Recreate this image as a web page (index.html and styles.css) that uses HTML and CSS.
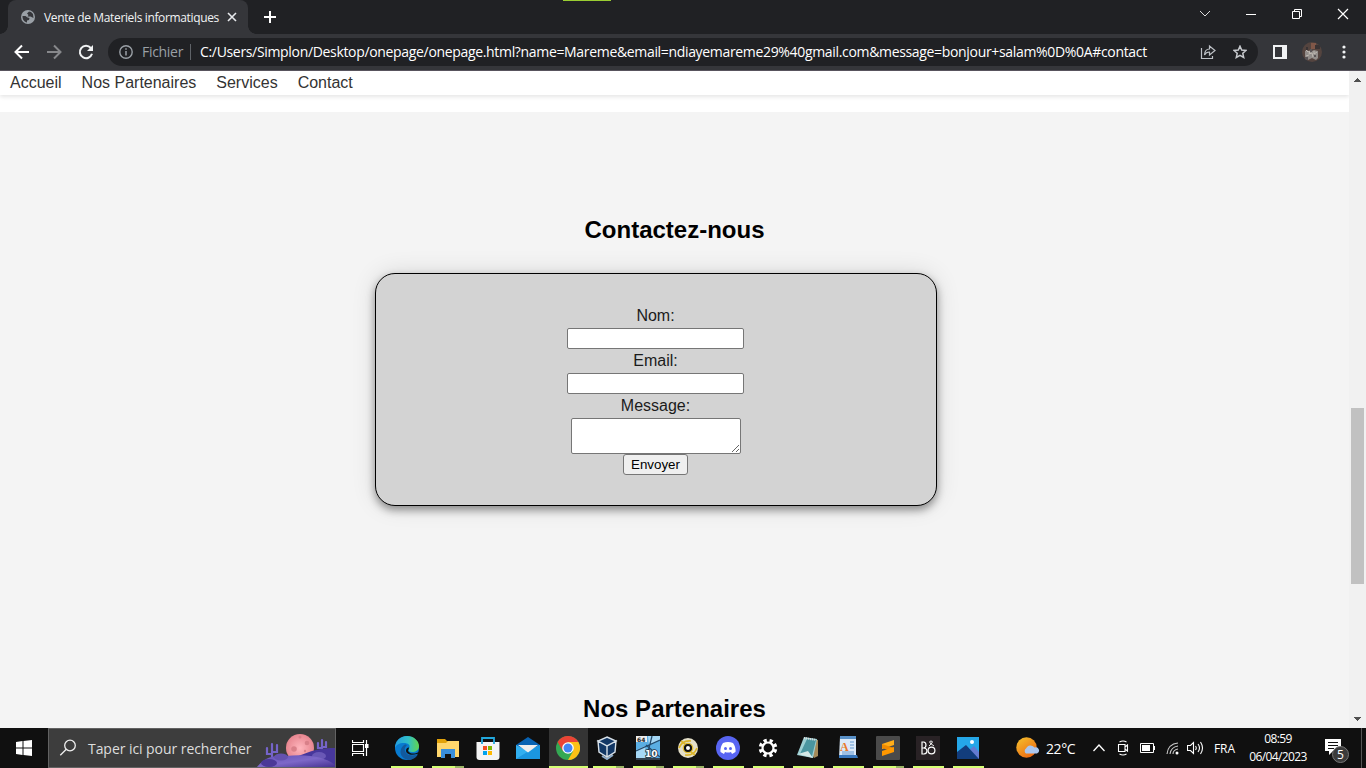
FILE: index.html
```html
<!DOCTYPE html>
<html lang="fr">
<head>
<meta charset="utf-8">
<title>Vente de Materiels informatiques</title>
<link rel="stylesheet" href="styles.css">
</head>
<body>
<div class="screen">
<header class="tabs">
  <div class="tab">
    <svg class="globe" width="14" height="14" viewBox="0 0 14 14"><circle cx="7" cy="7" r="7" fill="#9aa0a6"/><path d="M1.500 6h3l2 1.500 2 .5-.5 2-2 .5v2C3.500 12 1.500 10 1.500 6zM8 1.500l-2 2L7.500 5l-1 1.500h3L12.500 8 12 4 10 2z" fill="#35363a"/></svg>
    <span class="tab-title">Vente de Materiels informatiques</span>
    <svg class="tab-close" width="10" height="10" viewBox="0 0 10 10"><path d="m1 1 8 8M9 1 1 9" stroke="#e8eaed" stroke-width="1.600"/></svg>
  </div>
  <svg class="plus" width="12" height="12" viewBox="0 0 12 12"><path d="M6 0v12M0 6h12" stroke="#fff" stroke-width="2"/></svg>
  <div class="accent"></div>
  <div class="window-controls">
    <svg width="12" height="12" viewBox="0 0 12 12"><path d="m1 3 5 5 5-5" fill="none" stroke="#ddd"/></svg>
    <svg width="12" height="12" viewBox="0 0 12 12"><path d="M1 6.500h10" stroke="#fff"/></svg>
    <svg width="12" height="12" viewBox="0 0 12 12"><path d="M1.500 3.500h7v7h-7zM3.500 3V1.500h7v7H9" fill="none" stroke="#fff"/></svg>
    <svg width="12" height="12" viewBox="0 0 12 12"><path d="m1 1 10 10M11 1 1 11" stroke="#fff" stroke-width="1.200"/></svg>
  </div>
</header>
<div class="toolbar">
  <svg class="arrow" width="16" height="16" viewBox="0 0 16 16"><path d="M15 8H2M8 1.500 1.500 8 8 14.500" fill="none" stroke="#fff" stroke-width="2"/></svg>
  <svg class="arrow" width="16" height="16" viewBox="0 0 16 16"><path d="M1 8h13M8 1.500 14.500 8 8 14.500" fill="none" stroke="#87888b" stroke-width="2"/></svg>
  <svg class="reload" width="16" height="16" viewBox="0 0 16 16"><path d="M12.800 4A6.200 6.200 0 1 0 14 9.800" fill="none" stroke="#f1f3f4" stroke-width="2"/><path d="M15 1v6H9z" fill="#f1f3f4"/></svg>
  <div class="address">
    <svg class="info" width="14" height="14" viewBox="0 0 14 14"><circle cx="7" cy="7" r="6.200" fill="none" stroke="#9aa0a6" stroke-width="1.400"/><path d="M7 6v4.500M7 3.300v1.500" stroke="#9aa0a6" stroke-width="1.500"/></svg>
    <span class="scheme">Fichier</span><span class="divider"></span>
    <span class="url">C:/Users/Simplon/Desktop/onepage/onepage.html?name=Mareme&amp;email=ndiayemareme29%40gmail.com&amp;message=bonjour+salam%0D%0A#contact</span>
    <svg class="share" width="16" height="16" viewBox="0 0 16 16"><path d="M1.500 4v10.500h11V12M4.500 11c.2-4 2.200-6 5-6V2L15 6.500 9.500 11V8C7 8 5.500 9 4.500 11z" fill="none" stroke="#bdc1c6" stroke-width="1.200"/></svg>
    <svg class="star" width="14" height="14" viewBox="0 0 14 14"><path d="m7 1.200 1.700 3.900 4.300.4-3.200 2.800.9 4.200L7 10.300l-3.700 2.200.9-4.200L1 5.500l4.300-.4z" fill="none" stroke="#c7cace" stroke-width="1.500"/></svg>
  </div>
  <svg class="panel" width="14" height="14" viewBox="0 0 14 14"><path d="M0 0h14v14H0z" fill="#f1f3f4"/><path d="M2 2h7v10H2z" fill="#35363a"/></svg>
  <svg class="avatar" width="20" height="20" viewBox="0 0 20 20"><defs><clipPath id="av"><circle cx="10" cy="10" r="10"/></clipPath></defs><g clip-path="url(#av)"><path d="M0 0h20v20H0z" fill="#54443f"/><path d="M9 1h5v6H9z" fill="#805748"/><path d="M4 5h2v3H4zM13 3h5v4h-5z" fill="#393334"/><path d="m3 9 2-1 3 2 4-2 4 1v7l-2 2-4-2-4 2-3-2z" fill="#928d8a"/><path d="m4 8 2 2 2-1-1 3 3-1 1 4M12 9v3l3-2M4 14l3-1" stroke="#beb9b2" fill="none"/><path d="M8 7h2v3H8zm4 6h2v2h-2zM3 15h3v3H3z" fill="#5a5557"/></g></svg>
  <svg class="more" width="4" height="14" viewBox="0 0 4 14"><g fill="#f1f3f4"><circle cx="2" cy="2" r="1.600"/><circle cx="2" cy="7" r="1.600"/><circle cx="2" cy="12" r="1.600"/></g></svg>
</div>
<div class="viewport">
  <div class="page">
    <nav><a>Accueil</a><a>Nos Partenaires</a><a>Services</a><a>Contact</a></nav>
    <main>
      <h2>Contactez-nous</h2>
      <form>
        <label>Nom:</label><input type="text">
        <label>Email:</label><input type="email">
        <label>Message:</label><textarea></textarea>
        <button type="button">Envoyer</button>
      </form>
      <h2 class="partners">Nos Partenaires</h2>
    </main>
  </div>
  <div class="scrollbar">
    <svg width="7" height="4" viewBox="0 0 7 4" shape-rendering="crispEdges"><path d="M0 4 3.500 0 7 4z" fill="#505050"/></svg>
    <div class="thumb"></div>
    <svg class="down" width="7" height="4" viewBox="0 0 7 4" shape-rendering="crispEdges"><path d="m0 0 3.500 4L7 0z" fill="#505050"/></svg>
  </div>
</div>
<footer class="taskbar">
  <svg class="start" width="16" height="16" viewBox="0 0 16 16"><path d="m0 2 6.500-1v6.500H0zm7.500-1L16 0v7.500H7.500zM0 8.500h6.500V15L0 14zm7.500 0H16V16l-8.500-1z" fill="#fff"/></svg>
  <div class="search">
    <svg class="lens" width="18" height="18" viewBox="0 0 18 18"><circle cx="11" cy="6.500" r="5.300" fill="none" stroke="#eee" stroke-width="1.300"/><path d="m7.300 10.300-6 6" stroke="#eee" stroke-width="1.300"/></svg>
    <span class="search-text">Taper ici pour rechercher</span>
    <svg class="scene" width="80" height="38" viewBox="0 0 80 38">
      <defs><linearGradient id="hill" x2="1" y2="1"><stop stop-color="#6451b8"/><stop offset=".5" stop-color="#7d68c8"/><stop offset="1" stop-color="#443090"/></linearGradient><radialGradient id="moon"><stop stop-color="#ffb6bd"/><stop offset="1" stop-color="#e78690"/></radialGradient></defs>
      <circle cx="45" cy="19" r="14" fill="url(#moon)"/><g fill="#d98089"><circle cx="39" cy="20" r="2.800"/><circle cx="52" cy="14" r="2.300"/><circle cx="45" cy="8" r="1.500"/><circle cx="50" cy="22" r="1.200"/></g>
      <path d="M17 32V15M12 19v6h5M22 16v7h-5M67 24V11M63 14v5h4M71 13v5h-4" fill="none" stroke="#7564c9" stroke-width="2.200" stroke-linecap="round"/>
      <path d="M30 32C49 26 57 19 80 19v19H27z" fill="#47379c"/><ellipse cx="64" cy="27" rx="7" ry="4" fill="#6958b6"/>
      <path d="M2 38c9-11 18-12 29-11 28-3 45 4 51 11z" fill="url(#hill)"/><ellipse cx="26" cy="28" rx="7" ry="3.500" fill="#6452af"/><ellipse cx="14" cy="34" rx="8" ry="4" fill="#4b3998"/>
    </svg>
  </div>
  <div class="taskview"><svg width="17" height="16" viewBox="0 0 17 16"><path d="M.5 0v2.500h11V0M.5 4.500h11v7H.5zM.5 16v-2.500h11V16M14.500 0v16" fill="none" stroke="#fff" stroke-width="1.200"/><path d="M13 4h3.500v4H13z" fill="#fff"/></svg></div>
  <div class="apps">
    <div class="app running edge"><svg viewBox="0 0 24 24"><defs><linearGradient id="eg" x2="1"><stop stop-color="#249de0"/><stop offset=".55" stop-color="#30bfc8"/><stop offset="1" stop-color="#62d64b"/></linearGradient></defs><circle cx="12" cy="12" r="12" fill="#087bd0"/><path d="M0 12C0 5 5 0 12 0c7 0 12 5 12 10 0 4-3 6-7 6-3 0-4-1-3-3 2-4-1-6-5-6-5 0-8 2-9 5z" fill="url(#eg)"/><path d="M8 10c-6 7 0 14 7 14 4-1 7-3 8-6-6 3-12 1-13-3-1-2 0-4 2-6-1-1-3-.5-4 1z" fill="#12599d"/><path d="M14 11.500c0 2-2 3 0 4.500 2 2 6 2 9.500 0l.5 2.500q-1-1-2-.5c-6 2-11 0-11-3.500 0-1.500 1-3 3-3z" fill="#111"/></svg></div>
    <div class="app running multi explorer"><svg viewBox="0 0 24 24"><path d="M1 3h8l2 2H23v16H1z" fill="#e2a20a"/><path d="M1 7h9l2-2h11v16H1z" fill="#ffd66c"/><path d="M5 22v-9h14v9h-4v-4H9v4z" fill="#398edb"/><path d="M9 18h6v4H9z" fill="#111"/></svg></div>
    <div class="app"><svg viewBox="0 0 24 24"><path d="M.5 6h23v15q0 3-3 3h-17q-3 0-3-3z" fill="#f4f4f4"/><path d="M6 8V2h12v6" fill="none" stroke="#22a8dd" stroke-width="1.800"/><path d="M7 10h4v4H7z" fill="#f25022"/><path d="M12 10h4v4h-4z" fill="#7fba00"/><path d="M7 15h4v4H7z" fill="#00a4ef"/><path d="M12 15h4v4h-4z" fill="#ffb900"/></svg></div>
    <div class="app"><svg viewBox="0 0 24 24"><path d="M0 9 12 1l12 8v3L12 17 0 12z" fill="#0863b3"/><path d="m0 9 12 6 12-6v14H0z" fill="#32aff0"/><path d="M24 9 12 15.500 0 23h24z" fill="#1b96e0"/><path d="M2 9h20l-10 7.500z" fill="#eee"/></svg></div>
    <div class="app active"><svg viewBox="0 0 24 24"><circle cx="12" cy="12" r="12" fill="#34a853"/><path d="M1.600 6A12 12 0 0 1 22.400 6H12L6.800 15z" fill="#ea4335"/><path d="M22.400 6A12 12 0 0 1 12 24l5.200-9L12 6z" fill="#fbc116"/><circle cx="12" cy="12" r="5.800" fill="#fff"/><circle cx="12" cy="12" r="4.500" fill="#4285f4"/></svg></div>
    <div class="app running multi shifted"><svg viewBox="0 0 24 24"><path d="m7 20 5 3 6-4" fill="none" stroke="#8dabc8" stroke-width="2"/><path d="m12 1 9 4-9 5-9-5zM3 5l9 5v11l-8-5zM21 5l-9 5v11l8-5z" fill="#123765" stroke="#d7e0e8" stroke-width="1.400"/></svg></div>
    <div class="app running multi"><svg viewBox="0 0 24 24"><path d="M0 0h24v24H0z" fill="#5aaee3"/><path d="M12 0h12v4L13 9zM0 14l9-4 2 14H0z" fill="#a6d8f6"/><path d="m16 0-6 24M0 15 24 4M10 9l14 12" stroke="#234b6d" stroke-width="1.300"/><path d="M0 0h11v6H0z" fill="#eee"/><path d="M0 22h24v2H0z" fill="#32404e"/><text x="1" y="5.500" class="cpu-small">64</text><text x="9" y="20.500" class="cpu-big">10</text></svg></div>
    <div class="app running multi"><svg viewBox="0 0 24 24"><circle cx="12" cy="12" r="10" fill="#e4dfc9"/><path d="M3 12Q6 4 15 5M21 12q-3 8-12 7M5 5l4 3M15 16l4 3" fill="none" stroke="#dcb52a" stroke-width="1.700"/><circle cx="12" cy="12" r="4.700" fill="#111" stroke="#e0bd32" stroke-width="1.300"/><circle cx="12" cy="12" r="2" fill="#fff"/></svg></div>
    <div class="app running"><svg viewBox="0 0 24 24"><circle cx="12" cy="12" r="12" fill="#5865f2"/><path d="M7 7q5-2 10 0 3 4 2.500 9L16 18l-1-2q-3 1-6 0l-1 2-3.500-2Q4 11 7 7z" fill="#fff"/><circle cx="9.500" cy="12.500" r="1.500" fill="#5865f2"/><circle cx="14.500" cy="12.500" r="1.500" fill="#5865f2"/></svg></div>
    <div class="app running"><svg viewBox="0 0 24 24"><circle cx="12" cy="12" r="7.600" fill="none" stroke="#fff" stroke-width="3.400" stroke-dasharray="3.200 2.769" transform="rotate(10 12 12)"/><circle cx="12" cy="12" r="5.500" fill="#111" stroke="#fff" stroke-width="2.200"/></svg></div>
    <div class="app running"><svg viewBox="0 0 24 24"><path d="m8 2 14 2v16l-4 2z" fill="#a48a59"/><path d="M8 1 21 3 17 22 1 19z" fill="#9ccfd3"/><path d="m11 3 9 1-4 16-12-2z" fill="#4a96a0"/><path d="m8 2 12 2" stroke="#ddd" stroke-width="2" stroke-dasharray="1 1"/><path d="m2 18 10-3 5 7z" fill="#d4e8e6"/></svg></div>
    <div class="app running"><svg viewBox="0 0 24 24"><path d="M4 1h16v21H3z" fill="#dbe9f8"/><path d="M4 0h16v3H4z" fill="#5991c8"/><path d="M14 6h4M14 9h4M14 12h4M6 16h12M6 18h12" stroke="#6298d1"/><path d="M3 19h18l1 3H3z" fill="#3878be"/><text x="4" y="15" class="wordpad">A</text></svg></div>
    <div class="app running multi"><svg viewBox="0 0 24 24"><rect width="24" height="24" rx="1" fill="#4a4a4a"/><path d="m6 8 12-4v5L6 13z" fill="#ffad19"/><path d="m6 8 12 4v4L6 12z" fill="#f08a00"/><path d="m6 15 12-4v5L6 20z" fill="#ff9800"/></svg></div>
    <div class="app running"><svg viewBox="0 0 24 24"><path d="M0 0h24v24H0z" fill="#292225"/><path d="M6 6v12h2q3-.5 3-3t-3-3H6h1.500q2.500-.3 2.500-3T7.500 6z" fill="none" stroke="#fff" stroke-width="1.200"/><circle cx="15.500" cy="14.500" r="3.400" fill="none" stroke="#fff" stroke-width="1.200"/><path d="m18 10-4-3q-1-2 1-2t1 2l-3 3" fill="none" stroke="#fff" stroke-width=".9"/></svg></div>
    <div class="app running"><svg viewBox="0 0 24 24"><path d="M1 1h22v22H1z" fill="#25a7e8"/><path d="m12 15 6-5 5 6v7H12z" fill="#647bd1"/><path d="M1 16 10 9l13 14H1z" fill="#123d7c"/><circle cx="16" cy="6" r="2" fill="#fff"/></svg></div>
  </div>
  <svg class="weather" width="24" height="22" viewBox="0 0 24 22"><defs><linearGradient id="sun" x2=".7" y2="1"><stop stop-color="#f4c32d"/><stop offset="1" stop-color="#ed6912"/></linearGradient></defs><circle cx="10.500" cy="10.500" r="10.200" fill="url(#sun)"/><path d="M10 16.500a3 3 0 0 1 0-5 5 5 0 0 1 8.500-1 3 3 0 0 1 2.500 6z" fill="#aac6ef"/></svg>
  <span class="temp">22°C</span>
  <div class="tray">
    <svg class="chevron" width="14" height="10" viewBox="0 0 14 10"><path d="m1.500 8 5.500-6 5.500 6" fill="none" stroke="#fff" stroke-width="1.300"/></svg>
    <svg class="meet" width="12" height="16" viewBox="0 0 12 16"><path d="M1.500 4.500h6.500v7H1.500zM8 7l2.500-2v6L8 9M2.500 2q3.500-2 7 0M2.500 14q3.500 2 7 0" fill="none" stroke="#fff" stroke-width="1.100"/></svg>
    <svg class="battery" width="15" height="10" viewBox="0 0 15 10"><path d="M.5.5h13v9H.5zM14.500 3v4" fill="none" stroke="#fff"/><path d="M2 2h8v6H2z" fill="#fff"/></svg>
    <svg class="wifi" width="14" height="13" viewBox="0 0 14 13"><path d="M1 12Q2 2 12 1M4 12q1-7 8-8M7 12q0-4 5-5" fill="none" stroke="#ccc" stroke-width="1.100"/><circle cx="11" cy="11" r="1.500" fill="#fff"/></svg>
    <svg class="sound" width="17" height="14" viewBox="0 0 17 14"><path d="M.5 4.500h3l3-3v11l-3-3h-3zM8.500 5q1.500 2 0 4M11 3q3 4 0 8M13.500 1q4 6 0 12" fill="none" stroke="#fff" stroke-width="1.100"/></svg>
  </div>
  <span class="language">FRA</span>
  <div class="clock"><span class="time">08:59</span><span class="date">06/04/2023</span></div>
  <div class="notifications"><svg width="25" height="28" viewBox="0 0 25 28"><path d="M0 2h16v12H8l-4 4v-4H0z" fill="#fff"/><path d="M3 5.500h10M3 8.500h10M3 11.500h6" stroke="#111"/><circle cx="15.500" cy="17.500" r="8" fill="#3b3b3b" stroke="#777"/></svg><span class="count">5</span></div>
  <div class="desktop-edge"></div>
</footer>
</div>
</body>
</html>
```

FILE: styles.css
```css
* { box-sizing: border-box; }
body { margin: 0; overflow: hidden; font-family: "Liberation Sans", Arial, sans-serif; }
svg { display: block; flex: none; }
.screen { width: 1366px; height: 768px; display: flex; flex-direction: column; }
.tabs, .tab, .toolbar, .address, .taskbar, .search, .apps, .tray { display: flex; align-items: center; }
.tabs, .toolbar, .taskbar { font-family: "Open Sans", "Noto Sans", sans-serif; white-space: nowrap; }

.tabs { height: 34px; background: #202124; position: relative; flex: none; }
.tab { width: 240px; height: 34px; margin-left: 8px; padding-left: 13px; background: #35363a; border-radius: 8px 8px 0 0; position: relative; }
.tab::before, .tab::after { content: ""; position: absolute; bottom: 0; width: 8px; height: 8px; }
.tab::before { left: -8px; background: radial-gradient(circle at 0 0, #202124 7.5px, #35363a 8px); }
.tab::after { right: -8px; background: radial-gradient(circle at 100% 0, #202124 7.5px, #35363a 8px); }
.tab-title { width: 176px; margin-left: 9px; font-size: 12px; color: #f1f3f4; letter-spacing: -.36px; }
.tab-close { margin-left: 7px; }
.plus { margin-left: 16px; }
.accent { position: absolute; left: 563px; top: 0; width: 48px; height: 1px; background: #9acd32; }
.window-controls { display: flex; gap: 34px; margin: -6px 17px 0 auto; }

.toolbar { height: 37px; padding-left: 14px; background: #35363a; border-bottom: 1px solid #58545d; flex: none; }
.arrow { margin-right: 16px; }
.address { width: 1150px; height: 28px; margin-left: 14px; padding-left: 11px; border-radius: 14px; background: #202124; font-size: 14px; line-height: 28px; color: #fff; }
.scheme { width: 41px; margin-left: 9px; color: #9aa0a6; letter-spacing: -.3px; }
.scheme, .url { height: 28px; }
.divider { width: 1px; height: 16px; margin-left: 7px; background: #5f6368; }
.url { width: 1000px; margin-left: 9px; letter-spacing: -.33px; }
.star { margin-left: 17px; }
.panel { margin-left: 15px; }
.avatar { margin-left: 15px; }
.more { margin-left: 20px; }

.viewport { height: 657px; display: flex; flex: none; }
.page { width: 1349px; height: 657px; background: #fff; overflow: hidden; }
nav { height: 24px; padding-left: 10px; display: flex; gap: 20px; font-size: 16px; line-height: 23px; color: #333; box-shadow: 0 2px 4px rgba(0, 0, 0, .1); }
main { height: 616px; margin-top: 17px; padding-top: 104px; background: #f4f4f4; }
h2 { margin: 0; font-size: 24px; line-height: 28px; text-align: center; color: #000; }
form { width: 562px; height: 233px; margin: 29px 0 0 375px; padding: 30px 31px 30px 30px; border: 1px solid #000; border-radius: 20px; background: #d3d3d3; box-shadow: 0 4px 8px rgba(0, 0, 0, .4), 0 0 24px rgba(0, 0, 0, .12); display: flex; flex-direction: column; align-items: center; }
label { height: 24px; font-size: 16px; line-height: 23px; color: #1b1b1b; }
input { width: 177px; height: 21px; margin: 0; border: 1px solid #767676; border-radius: 2px; background: #fff; }
textarea { width: 170px; height: 36px; margin: 0 0 0 1px; border: 1px solid #767676; border-radius: 2px; background: #fff; }
button { width: 65px; height: 21px; padding: 0; border: 1px solid #767676; border-radius: 3px; background: #efefef; font: 13.333px "Liberation Sans", Arial, sans-serif; color: #000; }
.partners { margin-top: 189px; }
.scrollbar { width: 17px; background: #f1f1f1; padding-top: 7px; display: flex; flex-direction: column; align-items: center; }
.thumb { width: 13px; height: 176px; margin-top: 326px; background: #c1c1c1; }
.down { margin: auto 0 7px; }

.taskbar { height: 40px; background: #101010; color: #fff; flex: none; }
.start { margin-left: 16px; }
.search { width: 288px; height: 40px; margin-left: 16px; padding-left: 10px; border: 1px solid #626262; background: #3d3d3d; }
.search-text { width: 165px; margin-left: 11px; font-size: 14px; color: #ddd; letter-spacing: -.06px; }
.scene { margin-left: 2px; }
.taskview { width: 52px; height: 40px; padding: 12px 0 0 16px; }
.app { width: 40px; height: 40px; padding: 8px 0 0 8px; position: relative; }
.app svg { width: 24px; height: 24px; }
.edge svg { margin-left: -1px; }
.running::after { content: ""; position: absolute; left: 5px; bottom: 0; width: 31px; height: 2px; background: #d4ff75; }
.multi::after { background: linear-gradient(90deg, #d4ff75 23px, #9bb565 23px); }
.edge::after { left: 3px; width: 32px; }
.explorer::after { left: 4px; width: 32px; }
.shifted svg { margin-left: -1px; }
.active { background: linear-gradient(#343434, #343434) 1px 0 / 39px 40px no-repeat; }
.active::after { content: ""; position: absolute; left: 1px; bottom: 0; width: 39px; height: 2px; background: #d4ff75; }
.cpu-small { font: bold 6px "DejaVu Sans", sans-serif; fill: #222; }
.cpu-big { font: bold 9px "DejaVu Sans", sans-serif; fill: #fff; stroke: #27323c; stroke-width: 1.5px; paint-order: stroke; }
.wordpad { font: bold 12px "Liberation Serif", serif; fill: #e9792a; }
.weather { margin-left: 28px; }
.temp { width: 34px; margin-left: 6px; font-size: 14px; letter-spacing: -.4px; }
.tray { margin-left: 12px; width: 112px; }
.meet { margin-left: 11px; }
.battery { margin-left: 11px; }
.wifi { margin-left: 11px; }
.sound { margin-left: 7px; }
.language { width: 23px; margin-left: 10px; font-size: 12px; letter-spacing: -.1px; }
.clock { width: 62px; height: 36px; margin-left: 10px; display: flex; flex-direction: column; align-items: center; font-size: 12px; line-height: 18px; letter-spacing: -.6px; }
.notifications { margin: 6px 0 0 16px; position: relative; }
.count { position: absolute; left: 12px; top: 9px; font-size: 12px; line-height: 17px; }
.desktop-edge { width: 1px; height: 40px; margin-left: 11px; background: #555; }
```
